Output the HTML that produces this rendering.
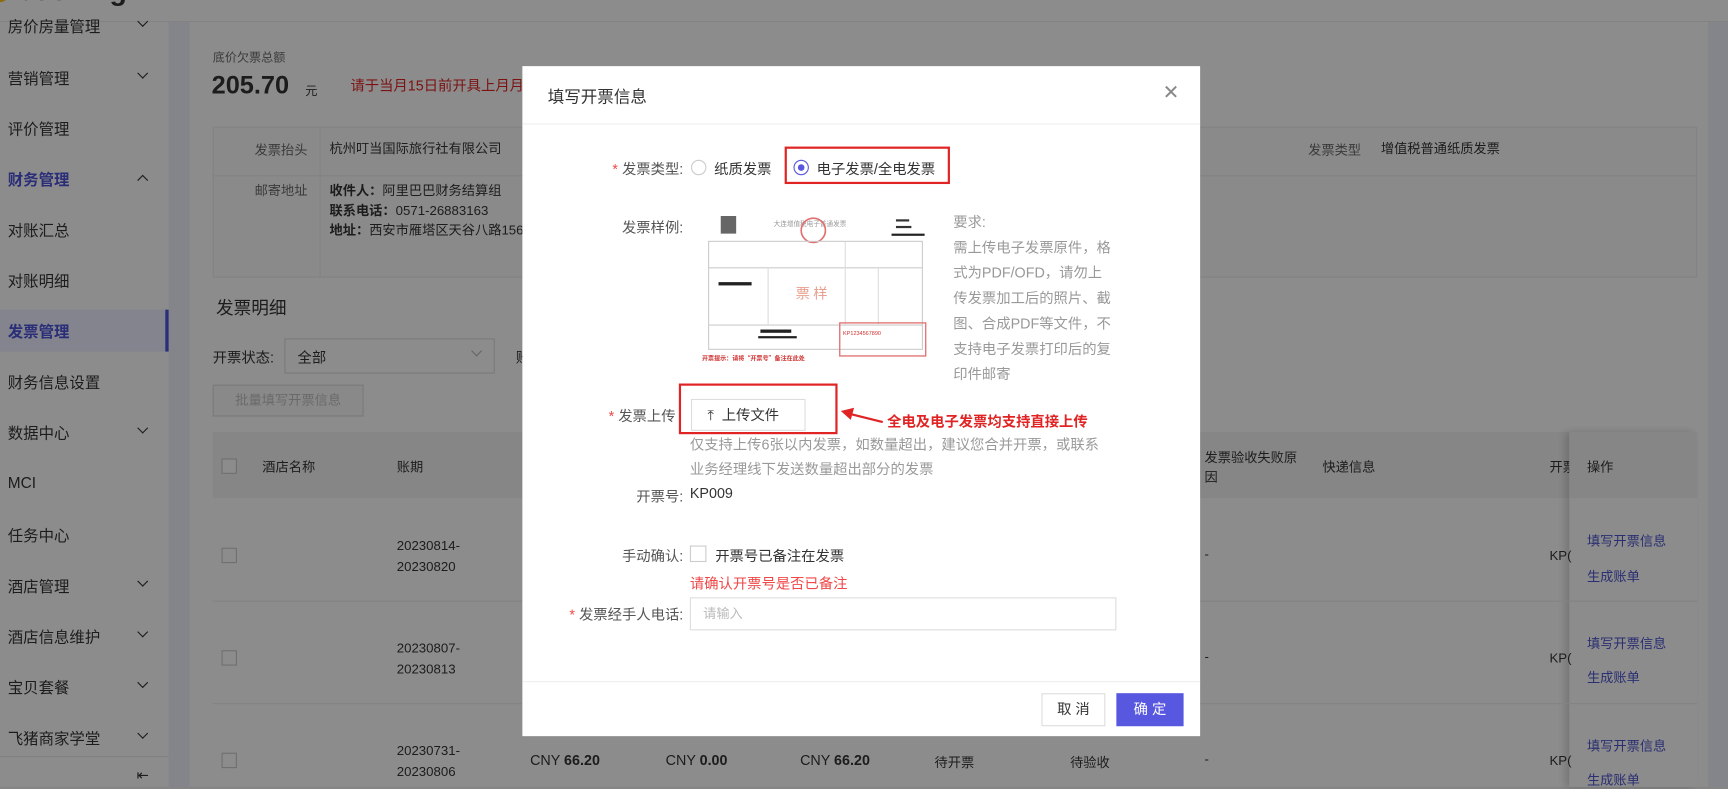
<!DOCTYPE html>
<html><head><meta charset="utf-8"><style>
*{margin:0;padding:0;box-sizing:border-box}
body{width:1728px;height:787px;overflow:hidden;background:#858585;font-family:"Liberation Sans","Noto Sans CJK SC",sans-serif;color:#333}
#s{position:absolute;left:0;top:0;width:1568px;height:714px;transform:scale(1.10204);transform-origin:0 0;background:#858585}
#bg{position:absolute;left:0;top:0;width:1568px;height:714px;background:#84858a;color:#1c1c1c}
#bg .a,#bg .si{color:#1c1c1c}
.a{position:absolute;white-space:nowrap}
.si{position:absolute;left:7px;font-size:14px}
.ch{position:absolute;left:126px;width:7px;height:7px;border-right:1.6px solid #1c1c1c;border-bottom:1.6px solid #1c1c1c;transform:rotate(45deg)}
.lbl{position:absolute;font-size:13px;color:#555;text-align:right;width:130px}
#bg .lk{position:absolute;left:1440px;font-size:12px;color:#2a2e72}
#bg .g{color:#3a3a3a}
#bg .bl{color:#2a2d78}
#bg .rd{color:#7c1212}
.gr{font-size:13px;color:#999}
</style></head><body><div id="s">
<div id="bg">
<div class="a" style="left:0;top:0;width:1568px;height:20px;background:#8c8c8c;border-bottom:1px solid #828282"></div>
<div class="a" style="left:-8px;top:-14px;width:16px;height:16px;border-radius:50%;background:#8a6e0d"></div>
<div class="a" style="left:14px;top:-24px;font-size:26px;font-weight:bold">booking</div>
<div class="a" style="left:0;top:20px;width:153px;height:694px;background:#8c8c8c"></div>
<div class="si" style="top:14px">房价房量管理</div><div class="ch" style="top:16px"></div>
<div class="si" style="top:61px">营销管理</div><div class="ch" style="top:63px"></div>
<div class="si" style="top:107px">评价管理</div>
<div class="si bl" style="top:153px;font-weight:bold">财务管理</div><div class="ch" style="top:160px;transform:rotate(-135deg)"></div>
<div class="si" style="top:199px">对账汇总</div>
<div class="si" style="top:245px">对账明细</div>
<div class="a" style="left:0;top:281px;width:153px;height:38px;background:#83848d;border-right:3px solid #2a2d78"></div>
<div class="si bl" style="top:291px;font-weight:bold">发票管理</div>
<div class="si" style="top:337px">财务信息设置</div>
<div class="si" style="top:383px">数据中心</div><div class="ch" style="top:385px"></div>
<div class="si" style="top:430px">MCI</div>
<div class="si" style="top:476px">任务中心</div>
<div class="si" style="top:522px">酒店管理</div><div class="ch" style="top:524px"></div>
<div class="si" style="top:568px">酒店信息维护</div><div class="ch" style="top:570px"></div>
<div class="si" style="top:614px">宝贝套餐</div><div class="ch" style="top:616px"></div>
<div class="si" style="top:660px">飞猪商家学堂</div><div class="ch" style="top:662px"></div>
<div class="a" style="left:0;top:686px;width:153px;height:1px;background:#828282"></div>
<div class="a" style="left:124px;top:696px;font-size:13px">⇤</div>
<div class="a" style="left:172px;top:20px;width:1378px;height:694px;background:#8c8c8c"></div>
<div class="a g" style="left:193px;top:44px;font-size:11px">底价欠票总额</div>
<div class="a" style="left:192px;top:64px;font-size:23px;font-weight:bold">205.70</div>
<div class="a" style="left:277px;top:74px;font-size:11px">元</div>
<div class="a rd" style="left:318px;top:67px;font-size:13px">请于当月15日前开具上月月</div>
<div class="a" style="left:193px;top:115px;width:1347px;height:137px;border:1px solid #838383;background:#8a8a8a"></div>
<div class="a" style="left:193px;top:159px;width:1347px;height:1px;background:#838383"></div>
<div class="a" style="left:290px;top:115px;width:1px;height:137px;background:#838383"></div>
<div class="a g" style="left:231px;top:127px;font-size:12px">发票抬头</div>
<div class="a" style="left:299px;top:126px;font-size:12px">杭州叮当国际旅行社有限公司</div>
<div class="a g" style="left:1187px;top:127px;font-size:12px">发票类型</div>
<div class="a" style="left:1253px;top:126px;font-size:12px">增值税普通纸质发票</div>
<div class="a g" style="left:231px;top:164px;font-size:12px">邮寄地址</div>
<div class="a" style="left:299px;top:164px;font-size:12px;line-height:18px"><b>收件人：</b>阿里巴巴财务结算组<br><b>联系电话：</b>0571-26883163<br><b>地址：</b>西安市雁塔区天谷八路156号</div>
<div class="a" style="left:196px;top:266px;font-size:16px">发票明细</div>
<div class="a" style="left:193px;top:314px;font-size:13px">开票状态:</div>
<div class="a" style="left:258px;top:307px;width:191px;height:32px;border:1px solid #7a7a7a;background:#8c8c8c"></div>
<div class="a" style="left:270px;top:314px;font-size:13px">全部</div>
<div class="a" style="left:429px;top:315px;width:7px;height:7px;border-right:1px solid #666;border-bottom:1px solid #666;transform:rotate(45deg)"></div>
<div class="a" style="left:468px;top:314px;font-size:13px">账</div>
<div class="a" style="left:193px;top:349px;width:137px;height:29px;border:1px solid #7a7a7a;background:#898989;font-size:12px;color:#6a6a6a !important;text-align:center;line-height:27px"><span style="color:#6a6a6a">批量填写开票信息</span></div>
<div class="a" style="left:193px;top:392px;width:1347px;height:60px;background:#868686"></div>
<div class="a" style="left:201px;top:416px;width:14px;height:14px;border:1px solid #6f6f6f;background:#8c8c8c"></div>
<div class="a" style="left:238px;top:415px;font-size:12px">酒店名称</div>
<div class="a" style="left:360px;top:415px;font-size:12px">账期</div>
<div class="a" style="left:1093px;top:406px;font-size:12px;line-height:18px">发票验收失败原<br>因</div>
<div class="a" style="left:1200px;top:415px;font-size:12px">快递信息</div>
<div class="a" style="left:1406px;top:415px;font-size:12px">开票</div>
<div class="a" style="left:1424px;top:392px;width:116px;height:322px;background:#8c8c8c;box-shadow:-4px 0 6px rgba(0,0,0,.15)"></div>
<div class="a" style="left:1424px;top:392px;width:116px;height:60px;background:#868686"></div>
<div class="a" style="left:1440px;top:415px;font-size:12px">操作</div>
<div class="a" style="left:193px;top:545px;width:1347px;height:1px;background:#838383"></div>
<div class="a" style="left:193px;top:638px;width:1347px;height:1px;background:#838383"></div>
<div class="a" style="left:201px;top:497px;width:14px;height:14px;border:1px solid #6f6f6f"></div>
<div class="a" style="left:201px;top:590px;width:14px;height:14px;border:1px solid #6f6f6f"></div>
<div class="a" style="left:201px;top:683px;width:14px;height:14px;border:1px solid #6f6f6f"></div>
<div class="a" style="left:360px;top:486px;font-size:12px;line-height:19px">20230814-<br>20230820</div>
<div class="a" style="left:360px;top:579px;font-size:12px;line-height:19px">20230807-<br>20230813</div>
<div class="a" style="left:360px;top:672px;font-size:12px;line-height:19px">20230731-<br>20230806</div>
<div class="a" style="left:481px;top:682px;font-size:13px">CNY <b>66.20</b></div>
<div class="a" style="left:604px;top:682px;font-size:13px">CNY <b>0.00</b></div>
<div class="a" style="left:726px;top:682px;font-size:13px">CNY <b>66.20</b></div>
<div class="a" style="left:848px;top:683px;font-size:12px">待开票</div>
<div class="a" style="left:971px;top:683px;font-size:12px">待验收</div>
<div class="a" style="left:1093px;top:496px;font-size:12px">-</div>
<div class="a" style="left:1093px;top:589px;font-size:12px">-</div>
<div class="a" style="left:1093px;top:682px;font-size:12px">-</div>
<div class="a" style="left:1406px;top:497px;font-size:12px">KP(</div>
<div class="a" style="left:1406px;top:590px;font-size:12px">KP(</div>
<div class="a" style="left:1406px;top:683px;font-size:12px">KP(</div>
<div class="lk" style="top:482px">填写开票信息</div><div class="lk" style="top:514px">生成账单</div>
<div class="lk" style="top:575px">填写开票信息</div><div class="lk" style="top:606px">生成账单</div>
<div class="lk" style="top:668px">填写开票信息</div><div class="lk" style="top:699px">生成账单</div>
</div>
<!-- modal -->
<div class="a" style="left:474px;top:60px;width:615px;height:608px;background:#fff"></div>
<div class="a" style="left:497px;top:77px;font-size:15px;color:#333">填写开票信息</div>
<div class="a" style="left:1055px;top:74px;font-size:18px;color:#888">✕</div>
<div class="a" style="left:474px;top:112px;width:615px;height:1px;background:#eee"></div>
<div class="a" style="left:474px;top:618px;width:615px;height:1px;background:#eee"></div>
<div class="a" style="left:945px;top:629px;width:58px;height:30px;border:1px solid #ddd;font-size:13px;text-align:center;line-height:28px">取 消</div>
<div class="a" style="left:1013px;top:629px;width:61px;height:30px;background:#5857e0;color:#fff;font-size:13px;text-align:center;line-height:30px">确 定</div>

<div class="lbl" style="left:490px;top:143px"><span style="color:#f04848">* </span>发票类型:</div>
<div class="a" style="left:627px;top:145px;width:14px;height:14px;border:1px solid #ccc;border-radius:50%"></div>
<div class="a" style="left:648px;top:143px;font-size:13px">纸质发票</div>
<div class="a" style="left:712px;top:133px;width:150px;height:34px;border:2px solid #e02424"></div>
<div class="a" style="left:720px;top:145px;width:14px;height:14px;border:1px solid #5857e0;border-radius:50%"><div style="margin:3px;width:6px;height:6px;border-radius:50%;background:#5857e0"></div></div>
<div class="a" style="left:741px;top:143px;font-size:13px">电子发票/全电发票</div>

<div class="lbl" style="left:490px;top:196px">发票样例:</div>
<svg class="a" style="left:637px;top:193px" width="205" height="140" viewBox="0 0 205 140">
<rect x="17" y="3" width="14" height="16" fill="#666"/>
<text x="65" y="12" font-size="6" fill="#999" font-family="Noto Sans CJK SC">大连增值税电子普通发票</text>
<circle cx="101" cy="16" r="11" fill="none" stroke="#e07070" stroke-width="1.5"/>
<rect x="176" y="6" width="12" height="2" fill="#333"/><rect x="176" y="12" width="14" height="2" fill="#333"/><rect x="172" y="19" width="30" height="2" fill="#222"/>
<rect x="6" y="26" width="194" height="98" fill="none" stroke="#ccc"/>
<line x1="6" y1="50" x2="200" y2="50" stroke="#ccc"/><line x1="6" y1="102" x2="200" y2="102" stroke="#ccc"/>
<line x1="60" y1="50" x2="60" y2="102" stroke="#ddd"/><line x1="130" y1="26" x2="130" y2="102" stroke="#ddd"/><line x1="160" y1="50" x2="160" y2="102" stroke="#ddd"/>
<rect x="15" y="63" width="30" height="3" fill="#222"/>
<text x="85" y="78" font-size="13" fill="#e8a090" font-family="Noto Sans CJK SC">票 样</text>
<rect x="53" y="106" width="28" height="3" fill="#222"/><rect x="51" y="112" width="35" height="2" fill="#222"/>
<rect x="125" y="100" width="78" height="30" fill="none" stroke="#e07070" stroke-width="1.2"/>
<text x="128" y="111" font-size="5" fill="#d03030">KP1234567890</text>
<text x="0" y="134" font-size="5.5" fill="#d03030" font-weight="bold" font-family="Noto Sans CJK SC">开票提示：请将“开票号”备注在此处</text>
</svg>
<div class="a gr" style="left:865px;top:190px;line-height:23px">要求:<br>需上传电子发票原件，格<br>式为PDF/OFD，请勿上<br>传发票加工后的照片、截<br>图、合成PDF等文件，不<br>支持电子发票打印后的复<br>印件邮寄</div>

<div class="lbl" style="left:483px;top:367px"><span style="color:#f04848">* </span>发票上传</div>
<div class="a" style="left:616px;top:348px;width:144px;height:46px;border:2px solid #e02424"></div>
<div class="a" style="left:627px;top:362px;width:104px;height:29px;border:1px solid #ddd;font-size:13px;line-height:27px;padding-left:14px">⤒&nbsp; 上传文件</div>
<svg class="a" style="left:763px;top:369px" width="40" height="18"><line x1="6" y1="6" x2="38" y2="14" stroke="#e02424" stroke-width="2"/><polygon points="0,4 12,1 9,12" fill="#e02424"/></svg>
<div class="a" style="left:805px;top:372px;font-size:13px;font-weight:bold;color:#e02424">全电及电子发票均支持直接上传</div>
<div class="a gr" style="left:626px;top:393px;line-height:22px">仅支持上传6张以内发票，如数量超出，建议您合并开票，或联系<br>业务经理线下发送数量超出部分的发票</div>

<div class="lbl" style="left:490px;top:440px">开票号:</div>
<div class="a" style="left:626px;top:440px;font-size:13px">KP009</div>
<div class="lbl" style="left:490px;top:494px">手动确认:</div>
<div class="a" style="left:626px;top:495px;width:15px;height:15px;border:1px solid #ccc"></div>
<div class="a" style="left:649px;top:494px;font-size:13px">开票号已备注在发票</div>
<div class="a" style="left:626px;top:519px;font-size:13px;color:#f04848">请确认开票号是否已备注</div>
<div class="lbl" style="left:490px;top:547px"><span style="color:#f04848">* </span>发票经手人电话:</div>
<div class="a" style="left:626px;top:542px;width:387px;height:30px;border:1px solid #ddd"></div>
<div class="a" style="left:638px;top:548px;font-size:12px;color:#bbb">请输入</div>
</div></body></html>
